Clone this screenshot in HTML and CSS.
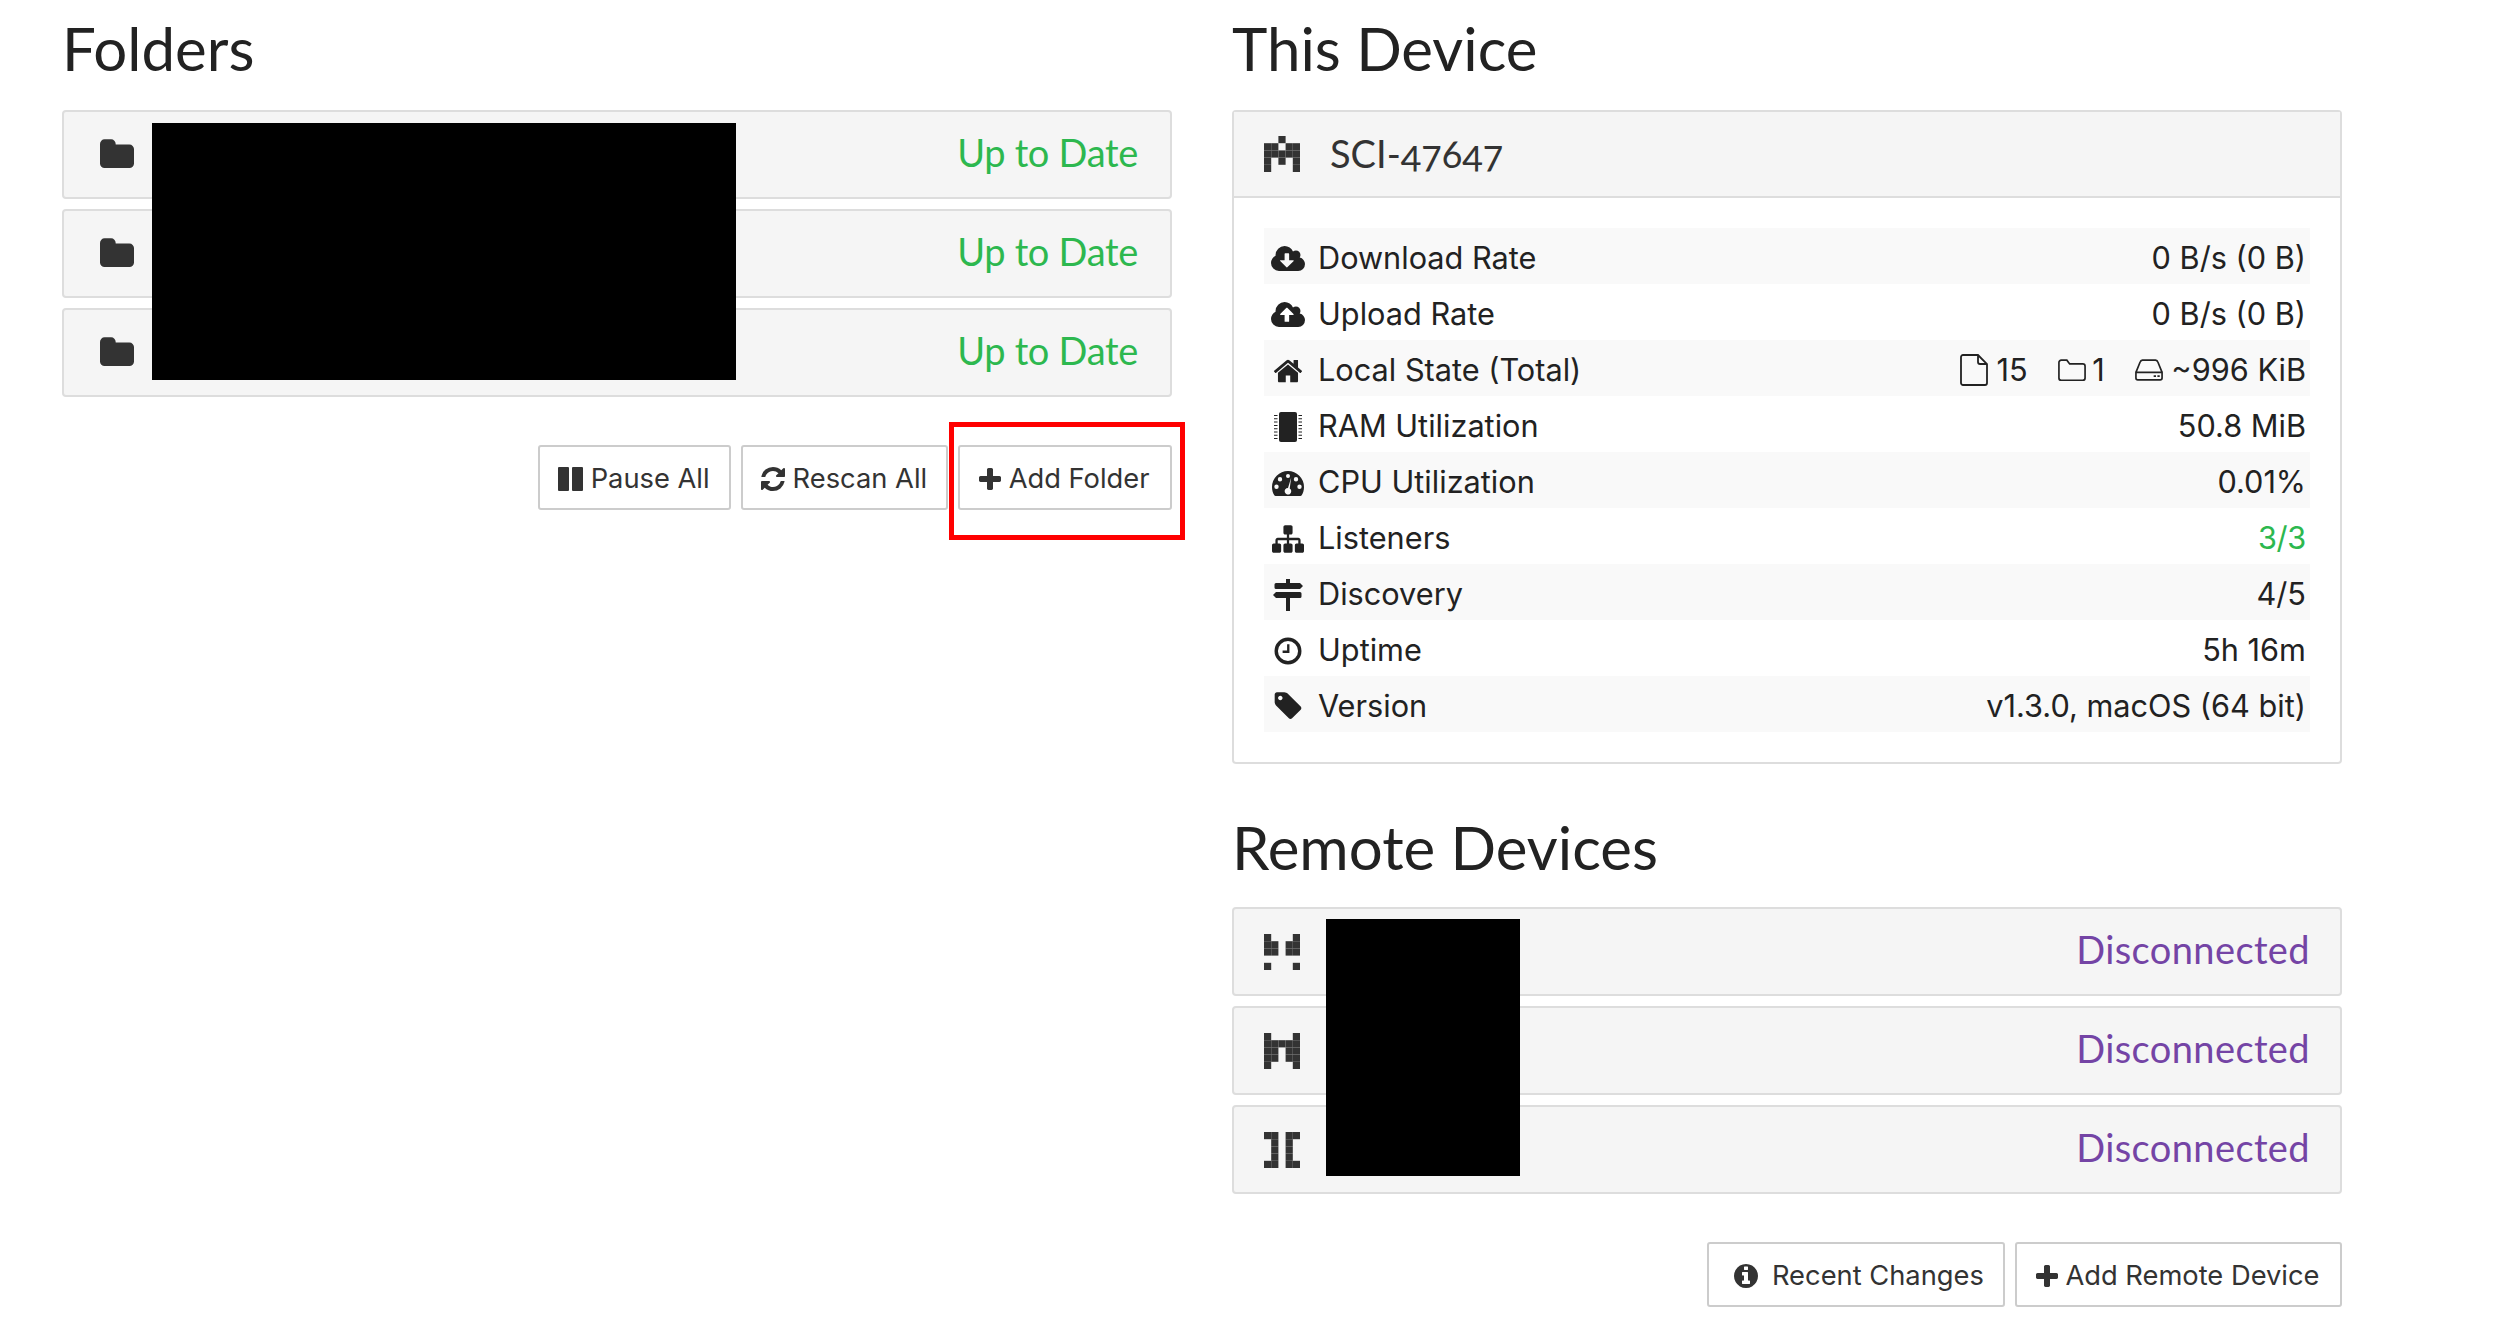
FILE: index.html
```html
<!DOCTYPE html>
<html lang="en">
<head>
    <meta charset="UTF-8">
    <title>Syncthing</title>
    <link rel="stylesheet" href="styles.css">
</head>
<body>
    <svg class="icon-defs" width="0" height="0">
        <defs>
            <path id="ic-folder" d="M1664 608v704q0 92-66 158t-158 66h-1216q-92 0-158-66t-66-158v-960q0-92 66-158t158-66h320q92 0 158 66t66 158v32h672q92 0 158 66t66 158z" transform="translate(0 -128) scale(1)"/>
            <path id="ic-plus" d="M1408 736v192q0 40-28 68t-68 28h-416v416q0 40-28 68t-68 28h-192q-40 0-68-28t-28-68v-416h-416q-40 0-68-28t-28-68v-192q0-40 28-68t68-28h416v-416q0-40 28-68t68-28h192q40 0 68 28t28 68v416h416q40 0 68 28t28 68z"/>
        </defs>
    </svg>

    <div class="page">
        <section class="col">
            <h3 class="heading">Folders</h3>
            <div class="stack">
                <div class="panel-row">
                    <svg class="row-icon" viewBox="0 0 1664 1536"><use href="#ic-folder"/></svg>
                    <span class="status ok">Up to Date</span>
                </div>
                <div class="panel-row">
                    <svg class="row-icon" viewBox="0 0 1664 1536"><use href="#ic-folder"/></svg>
                    <span class="status ok">Up to Date</span>
                </div>
                <div class="panel-row">
                    <svg class="row-icon" viewBox="0 0 1664 1536"><use href="#ic-folder"/></svg>
                    <span class="status ok">Up to Date</span>
                </div>
                <div class="redact redact-folders"></div>
            </div>
            <div class="actions">
                <button class="btn">
                    <svg class="btn-icon btn-icon-pause" viewBox="0 0 25 24"><rect x="0" y="0" width="11" height="24" rx="1"/><rect x="14" y="0" width="11" height="24" rx="1"/></svg>
                    Pause All
                </button>
                <button class="btn">
                    <svg class="btn-icon" viewBox="0 0 1536 1536"><path d="M1511 928q0 5-1 7-64 268-268 434.500t-478 166.500q-146 0-282.500-55t-243.500-157l-129 129q-19 19-45 19t-45-19-19-45v-448q0-26 19-45t45-19h448q26 0 45 19t19 45-19 45l-137 137q71 66 161 102t187 36q134 0 250-65t186-179q11-17 53-117 8-23 30-23h192q13 0 22.500 9.500t9.500 22.500zM1536 128v448q0 26-19 45t-45 19h-448q-26 0-45-19t-19-45 19-45l138-138q-148-137-349-137-134 0-250 65t-186 179q-11 17-53 117-8 23-30 23h-199q-13 0-22.500-9.500t-9.500-22.500v-7q65-268 270-434.500t480-166.500q146 0 284 55.500t245 156.500l130-129q19-19 45-19t45 19 19 45z"/></svg>
                    Rescan All
                </button>
                <div class="highlighted">
                    <button class="btn btn-add">
                        <svg class="btn-icon" viewBox="-64 -64 1536 1536"><use href="#ic-plus" transform="translate(0 -128)"/></svg>
                        Add Folder
                    </button>
                </div>
            </div>
        </section>

        <section class="col">
            <h3 class="heading">This Device</h3>
            <div class="panel">
                <div class="panel-head">
                    <svg class="identicon" viewBox="0 0 5 5">
                        <rect x="2" y="0" width="1" height="1"/>
                        <rect x="0" y="1" width="1" height="1"/><rect x="1" y="1" width="1" height="1"/><rect x="3" y="1" width="1" height="1"/><rect x="4" y="1" width="1" height="1"/>
                        <rect x="0" y="2" width="1" height="1"/><rect x="1" y="2" width="1" height="1"/><rect x="2" y="2" width="1" height="1"/><rect x="3" y="2" width="1" height="1"/><rect x="4" y="2" width="1" height="1"/>
                        <rect x="0" y="3" width="1" height="1"/><rect x="2" y="3" width="1" height="1"/><rect x="4" y="3" width="1" height="1"/>
                        <rect x="0" y="4" width="1" height="1"/><rect x="4" y="4" width="1" height="1"/>
                    </svg>
                    <span class="device-name">SCI-47647</span>
                </div>
                <div class="panel-body">
                    <table class="stats">
                        <tr>
                            <th><svg class="stat-icon" viewBox="0 -200 1920 1807"><path d="M1280 800q0-14-9-23t-23-9h-224v-352q0-13-9.500-22.500t-22.500-9.500h-192q-13 0-22.500 9.500t-9.500 22.500v352h-224q-13 0-22.500 9.500t-9.500 22.500q0 14 9 23l352 352q9 9 23 9t23-9l351-351q10-12 10-24zM1920 992q0 159-112.500 271.500t-271.500 112.500h-1088q-185 0-316.500-131.500t-131.500-316.500q0-130 70-240t188-165q-2-30-2-43 0-212 150-362t362-150q156 0 285.500 87t188.500 231q71-62 166-62 106 0 181 75t75 181q0 76-41 138 130 31 213.500 135.500t83.500 238.500z"/></svg>Download Rate</th>
                            <td>0 B/s (0 B)</td>
                        </tr>
                        <tr>
                            <th><svg class="stat-icon" viewBox="0 -200 1920 1807"><path d="M1280 672q0-14-9-23l-352-352q-9-9-23-9t-23 9l-351 351q-10 12-10 24 0 14 9 23t23 9h224v352q0 13 9.500 22.500t22.500 9.500h192q13 0 22.500-9.500t9.500-22.500v-352h224q13 0 22.500-9.500t9.500-22.500zM1920 992q0 159-112.500 271.500t-271.500 112.500h-1088q-185 0-316.500-131.500t-131.500-316.500q0-130 70-240t188-165q-2-30-2-43 0-212 150-362t362-150q156 0 285.500 87t188.500 231q71-62 166-62 106 0 181 75t75 181q0 76-41 138 130 31 213.500 135.500t83.500 238.500z"/></svg>Upload Rate</th>
                            <td>0 B/s (0 B)</td>
                        </tr>
                        <tr>
                            <th><svg class="stat-icon" viewBox="-143 -218 1951 1836"><path d="M1408 800v480q0 26-19 45t-45 19h-384v-384h-256v384h-384q-26 0-45-19t-19-45v-480q0-1 .5-3t.5-3l575-474 575 474q1 2 1 6zM1631 731l-62 74q-8 9-21 11h-3q-13 0-21-7l-692-577-692 577q-12 8-24 7-13-2-21-11l-62-74q-8-10-7-23.500t11-21.500l719-599q32-26 76-26t76 26l244 204v-195q0-14 9-23t23-9h192q14 0 23 9t9 23v408l219 182q10 8 11 21.500t-7 23.500z"/></svg>Local State (Total)</th>
                            <td>
                                <span class="tally">
                                    <svg class="tally-icon" viewBox="0 0 28 32"><path d="M1 3a2 2 0 0 1 2-2h15l9 9v19a2 2 0 0 1-2 2h-22a2 2 0 0 1-2-2zM18 1v7a2 2 0 0 0 2 2h7"/></svg>15
                                </span>
                                <span class="tally">
                                    <svg class="tally-icon tally-folder" viewBox="0 0 30 24"><path d="M1 4a2.500 2.500 0 0 1 2.500-2.500h6l3 4h14a2.500 2.500 0 0 1 2.500 2.500v12.500a2.500 2.500 0 0 1-2.500 2.500h-23a2.500 2.500 0 0 1-2.500-2.500z"/></svg>1
                                </span>
                                <span class="tally">
                                    <svg class="tally-icon tally-drive" viewBox="0 0 30 24"><path d="M1 14.500l4.500-11a3 3 0 0 1 2.500-2h14a3 3 0 0 1 2.500 2l4.500 11M1 14.500v6a2 2 0 0 0 2 2h24a2 2 0 0 0 2-2v-6zM1 14.500h28"/><path class="dots" d="M20 17.500h2.500v2h-2.500zM24 17.500h2.500v2h-2.500z"/></svg>~996 KiB
                                </span>
                            </td>
                        </tr>
                        <tr>
                            <th><svg class="stat-icon" viewBox="0 -1 34 32"><path d="M8 2a2 2 0 0 1 2-2h14a2 2 0 0 1 2 2v26a2 2 0 0 1-2 2h-14a2 2 0 0 1-2-2z"/><path d="M3 3h3.500v1h-3.500zM3 6.300h3.500v1h-3.500zM3 9.600h3.500v1h-3.500zM3 12.900h3.500v1h-3.500zM3 16.200h3.500v1h-3.500zM3 19.500h3.500v1h-3.500zM3 22.800h3.500v1h-3.500zM3 26.100h3.500v1h-3.500zM27.500 3h3.500v1h-3.500zM27.500 6.300h3.500v1h-3.500zM27.500 9.600h3.500v1h-3.500zM27.500 12.900h3.500v1h-3.500zM27.500 16.200h3.500v1h-3.500zM27.500 19.500h3.500v1h-3.500zM27.500 22.800h3.500v1h-3.500zM27.500 26.100h3.500v1h-3.500z"/></svg>RAM Utilization</th>
                            <td>50.8 MiB</td>
                        </tr>
                        <tr>
                            <th><svg class="stat-icon" viewBox="-1 -4 34 32"><path fill-rule="evenodd" d="M16 0a16 16 0 0 1 16 16c0 3.200-.8 6-2.300 8.300a1.500 1.500 0 0 1-1.300.7h-24.800a1.500 1.500 0 0 1-1.300-.7c-1.500-2.300-2.300-5.100-2.300-8.300a16 16 0 0 1 16-16zM16 3a2 2 0 1 0 0 4 2 2 0 0 0 0-4zM8 6a2.200 2.200 0 1 0 0 4.400 2.200 2.200 0 0 0 0-4.400zM24 6a2.200 2.200 0 1 0 0 4.400 2.200 2.200 0 0 0 0-4.400zM4.500 13.500a2.200 2.200 0 1 0 0 4.400 2.200 2.200 0 0 0 0-4.400zM27.500 13.500a2.200 2.200 0 1 0 0 4.400 2.200 2.200 0 0 0 0-4.400zM19.200 6.500l-3.200 10.500a3.300 3.300 0 1 0 1.700 .5z"/></svg>CPU Utilization</th>
                            <td>0.01%</td>
                        </tr>
                        <tr>
                            <th><svg class="stat-icon" viewBox="-56 -128 1904 1792"><path d="M1792 1248v320q0 40-28 68t-68 28h-320q-40 0-68-28t-28-68v-320q0-40 28-68t68-28h96v-192h-512v192h96q40 0 68 28t28 68v320q0 40-28 68t-68 28h-320q-40 0-68-28t-28-68v-320q0-40 28-68t68-28h96v-192h-512v192h96q40 0 68 28t28 68v320q0 40-28 68t-68 28h-320q-40 0-68-28t-28-68v-320q0-40 28-68t68-28h96v-192q0-52 38-90t90-38h512v-192h-96q-40 0-68-28t-28-68v-320q0-40 28-68t68-28h320q40 0 68 28t28 68v320q0 40-28 68t-68 28h-96v192h512q52 0 90 38t38 90v192h96q40 0 68 28t28 68z" transform="translate(0 -128)"/></svg>Listeners</th>
                            <td class="good">3/3</td>
                        </tr>
                        <tr>
                            <th><svg class="stat-icon" viewBox="-2 0 34 32"><path d="M13 0h4v4h10l3 3-3 3h-24a1.500 1.500 0 0 1-1.500-1.500v-3a1.500 1.500 0 0 1 1.500-1.500h10zM3 13h24a1.500 1.500 0 0 1 1.500 1.500v3a1.500 1.500 0 0 1-1.500 1.500h-10v13h-4v-13h-10l-3-3z"/></svg>Discovery</th>
                            <td>4/5</td>
                        </tr>
                        <tr>
                            <th><svg class="stat-icon" viewBox="-3.900 -2.800 37.800 35.600"><path fill-rule="evenodd" d="M15 0a15 15 0 1 1 0 30 15 15 0 0 1 0-30zM15 3.800a11.200 11.200 0 1 0 0 22.400 11.200 11.200 0 0 0 0-22.400zM14 7.500h2.600v9.600h-7.600v-2.600h5z"/></svg>Uptime</th>
                            <td>5h 16m</td>
                        </tr>
                        <tr>
                            <th><svg class="stat-icon" viewBox="-209 -77 1932 1818"><path d="M448 320q0-53-37.500-90.500t-90.500-37.500-90.500 37.500-37.500 90.500 37.500 90.500 90.500 37.500 90.500-37.500 37.500-90.500zM1515 896q0 53-37 90l-491 492q-39 37-91 37-53 0-90-37l-715-716q-38-37-64.500-101t-26.500-117v-416q0-52 38-90t90-38h416q53 0 117 26.500t102 64.500l715 714q37 39 37 91z"/></svg>Version</th>
                            <td>v1.3.0, macOS (64 bit)</td>
                        </tr>
                    </table>
                </div>
            </div>

            <h3 class="heading heading-remote">Remote Devices</h3>
            <div class="stack">
                <div class="panel-row device">
                    <svg class="identicon" viewBox="0 0 5 5">
                        <rect x="0" y="0" width="1" height="1"/><rect x="4" y="0" width="1" height="1"/>
                        <rect x="0" y="1" width="1" height="1"/><rect x="1" y="1" width="1" height="1"/><rect x="3" y="1" width="1" height="1"/><rect x="4" y="1" width="1" height="1"/>
                        <rect x="0" y="2" width="1" height="1"/><rect x="1" y="2" width="1" height="1"/><rect x="3" y="2" width="1" height="1"/><rect x="4" y="2" width="1" height="1"/>
                        <rect x="0" y="4" width="1" height="1"/><rect x="4" y="4" width="1" height="1"/>
                    </svg>
                    <span class="status off">Disconnected</span>
                </div>
                <div class="panel-row device">
                    <svg class="identicon" viewBox="0 0 5 5">
                        <rect x="0" y="0" width="1" height="1"/><rect x="4" y="0" width="1" height="1"/>
                        <rect x="0" y="1" width="1" height="1"/><rect x="1" y="1" width="1" height="1"/><rect x="2" y="1" width="1" height="1"/><rect x="3" y="1" width="1" height="1"/><rect x="4" y="1" width="1" height="1"/>
                        <rect x="0" y="2" width="1" height="1"/><rect x="1" y="2" width="1" height="1"/><rect x="3" y="2" width="1" height="1"/><rect x="4" y="2" width="1" height="1"/>
                        <rect x="0" y="3" width="1" height="1"/><rect x="1" y="3" width="1" height="1"/><rect x="3" y="3" width="1" height="1"/><rect x="4" y="3" width="1" height="1"/>
                        <rect x="0" y="4" width="1" height="1"/><rect x="4" y="4" width="1" height="1"/>
                    </svg>
                    <span class="status off">Disconnected</span>
                </div>
                <div class="panel-row device">
                    <svg class="identicon" viewBox="0 0 5 5">
                        <rect x="0" y="0" width="1" height="1"/><rect x="1" y="0" width="1" height="1"/><rect x="3" y="0" width="1" height="1"/><rect x="4" y="0" width="1" height="1"/>
                        <rect x="1" y="1" width="1" height="1"/><rect x="3" y="1" width="1" height="1"/>
                        <rect x="1" y="2" width="1" height="1"/><rect x="3" y="2" width="1" height="1"/>
                        <rect x="1" y="3" width="1" height="1"/><rect x="3" y="3" width="1" height="1"/>
                        <rect x="0" y="4" width="1" height="1"/><rect x="1" y="4" width="1" height="1"/><rect x="3" y="4" width="1" height="1"/><rect x="4" y="4" width="1" height="1"/>
                    </svg>
                    <span class="status off">Disconnected</span>
                </div>
                <div class="redact redact-devices"></div>
            </div>
            <div class="actions">
                <button class="btn">
                    <svg class="btn-icon btn-icon-info" viewBox="0 0 1536 1536"><path d="M1024 1248v-160q0-14-9-23t-23-9h-96v-512q0-14-9-23t-23-9h-320q-14 0-23 9t-9 23v160q0 14 9 23t23 9h96v320h-96q-14 0-23 9t-9 23v160q0 14 9 23t23 9h448q14 0 23-9t9-23zM896 352v-160q0-14-9-23t-23-9h-192q-14 0-23 9t-9 23v160q0 14 9 23t23 9h192q14 0 23-9t9-23zM1536 768q0 209-103 385.500t-279.500 279.500-385.500 103-385.500-103-279.500-279.500-103-385.500 103-385.500 279.500-279.500 385.500-103 385.500 103 279.500 279.500 103 385.500z" fill-rule="evenodd"/></svg>
                    Recent Changes
                </button>
                <button class="btn btn-add">
                    <svg class="btn-icon" viewBox="-64 -64 1536 1536"><use href="#ic-plus" transform="translate(0 -128)"/></svg>
                    Add Remote Device
                </button>
            </div>
        </section>
    </div>
</body>
</html>
```

FILE: styles.css
```css
* {
    box-sizing: border-box;
}

html, body {
    margin: 0;
    padding: 0;
    background-color: #fff;
}

body {
    font-family: "Inter", "Liberation Sans", sans-serif;
    color: #333;
}

.icon-defs {
    position: absolute;
}

.page {
    display: flex;
    gap: 60px;
    padding: 0 0 0 62px;
}

.col {
    width: 1110px;
}

.heading {
    margin: 0;
    height: 110px;
    padding-top: 15px;
    font-family: "Lato", "Noto Sans", sans-serif;
    font-size: 60px;
    line-height: 66px;
    font-weight: 400;
    color: #222;
}

.heading-remote {
    height: 108px;
    margin-top: 35px;
}

.stack {
    position: relative;
    display: flex;
    flex-direction: column;
    gap: 10px;
}

.panel-row {
    display: flex;
    align-items: center;
    justify-content: space-between;
    height: 89px;
    padding: 0 32px 0 36px;
    background-color: #f5f5f5;
    border: 2px solid #ddd;
    border-radius: 4px;
}

.panel-row.device {
    padding-left: 30px;
    padding-right: 30px;
}

.row-icon {
    width: 34px;
    height: 32px;
    fill: #333;
}

.status {
    font-family: "Lato", "Noto Sans", sans-serif;
    font-size: 38px;
    padding-bottom: 5px;
}

.status.ok, .good {
    color: #2db84f;
    letter-spacing: -0.3px;
}

.status.off {
    color: #7444a5;
    letter-spacing: 0.4px;
}

.redact {
    position: absolute;
    background-color: #000;
}

.redact-folders {
    left: 90px;
    top: 13px;
    width: 584px;
    height: 257px;
}

.redact-devices {
    left: 94px;
    top: 12px;
    width: 194px;
    height: 257px;
}

.actions {
    display: flex;
    justify-content: flex-end;
    gap: 10px;
    margin-top: 48px;
}

.btn {
    display: inline-flex;
    align-items: center;
    height: 65px;
    padding: 2px 19px 0 18px;
    font-family: inherit;
    font-size: 27.3px;
    color: #333;
    background-color: #fff;
    border: 2px solid #ccc;
    border-radius: 3px;
}

.btn-add {
    padding-right: 20.5px;
}

.btn-icon {
    width: 24px;
    height: 24px;
    margin-right: 8px;
    fill: #333;
}

.btn-add .btn-icon {
    margin-right: 6.5px;
}

.btn-icon-pause {
    width: 25px;
}

.btn-icon-info {
    margin: 0 14px 0 7px;
}

.highlighted {
    position: relative;
}

.highlighted::after {
    content: "";
    position: absolute;
    left: -9px;
    right: -13px;
    top: -23px;
    bottom: -30px;
    border: 5px solid #f00;
}

.panel {
    background-color: #fff;
    border: 2px solid #ddd;
    border-radius: 4px;
}

.panel-head {
    display: flex;
    align-items: center;
    height: 86px;
    padding-left: 30px;
    background-color: #f5f5f5;
    border-bottom: 2px solid #ddd;
}

.identicon {
    width: 36px;
    height: 36px;
    fill: #333;
    flex: none;
}

.device-name {
    margin-left: 30px;
    padding-bottom: 2px;
    font-family: "Lato", "Noto Sans", sans-serif;
    font-size: 38px;
    font-feature-settings: "onum";
}

.panel-body {
    padding: 30px;
}

.stats {
    width: 100%;
    border-collapse: collapse;
    font-size: 30.7px;
    color: #222;
}

.stats tr {
    height: 56px;
}

.stats tr:nth-child(odd) {
    background-color: #f9f9f9;
}

.stats th {
    font-weight: 400;
    text-align: left;
    padding: 2px 0 0 7px;
}

.stats td {
    text-align: right;
    padding: 2px 4px 0 0;
}

.stats td.good {
    color: #2db84f;
}

.stat-icon {
    display: inline-block;
    width: 34px;
    height: 32px;
    margin-right: 13px;
    vertical-align: -6px;
    fill: #222;
}

.tally {
    margin-left: 22px;
}

.tally-icon {
    display: inline-block;
    width: 28px;
    height: 32px;
    margin-right: 8px;
    vertical-align: -5px;
    fill: none;
    stroke: #222;
    stroke-width: 1.8;
}

.tally-folder, .tally-drive {
    height: 24px;
    vertical-align: -1px;
}

.tally-folder {
    margin-right: 6px;
}

.tally-icon .dots {
    fill: #222;
    stroke: none;
}
```
